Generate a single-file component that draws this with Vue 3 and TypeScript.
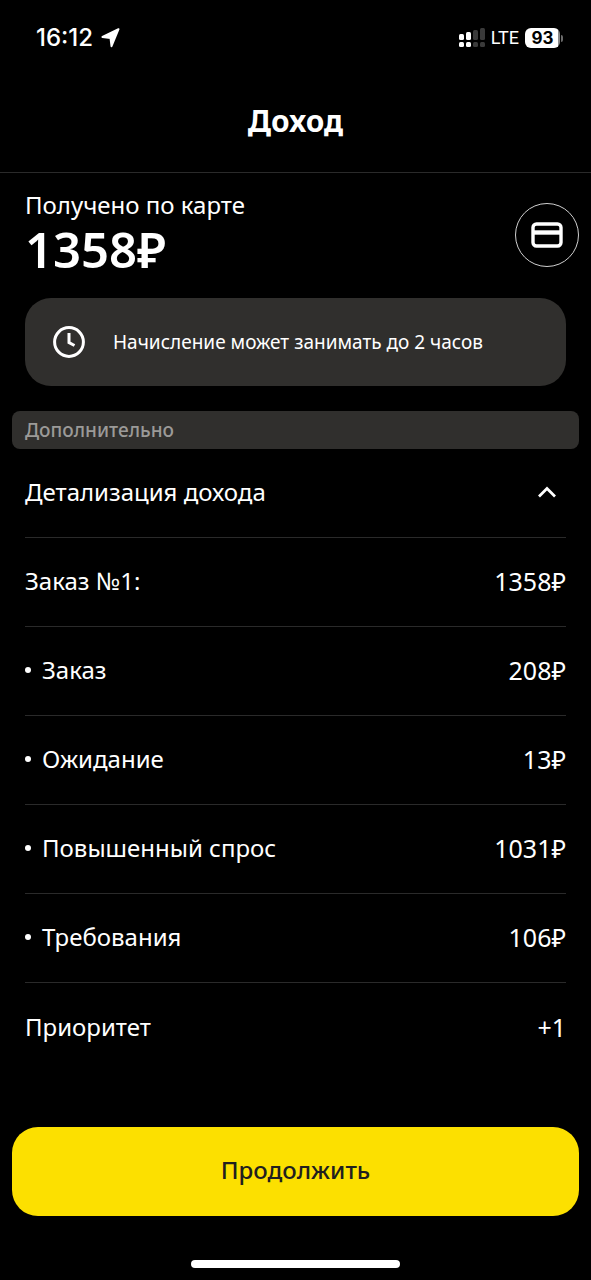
<script setup lang="ts">
import { ref } from 'vue'

interface Row {
  label: string
  value: string
  nested?: boolean
}

const expanded = ref<boolean>(true)

const rows: Row[] = [
  { label: 'Заказ №1:', value: '1358₽' },
  { label: 'Заказ', value: '208₽', nested: true },
  { label: 'Ожидание', value: '13₽', nested: true },
  { label: 'Повышенный спрос', value: '1031₽', nested: true },
  { label: 'Требования', value: '106₽', nested: true },
  { label: 'Приоритет', value: '+1' },
]
</script>

<template>
  <div class="screen">
    <div class="status">
      <div class="status-left">
        <span class="time">16:12</span>
        <svg class="location" width="19" height="20" viewBox="0 0 19 20" aria-hidden="true">
          <path d="M17.500 1.200 1.500 9 9.500 10 10.500 18.200Z" fill="#fff" stroke="#fff" stroke-width="2" stroke-linejoin="round" />
        </svg>
      </div>
      <div class="status-right">
        <svg class="signal" width="26" height="20" viewBox="0 0 26 20" aria-hidden="true">
          <g fill="#fff">
            <rect x="0" y="6" width="5" height="6" rx="1.500" />
            <rect x="0" y="14" width="5" height="5" rx="1.500" />
            <rect x="7" y="4" width="5" height="8" rx="1.500" />
            <rect x="7" y="14" width="5" height="5" rx="1.500" />
          </g>
          <g fill="#3a3a3a">
            <rect x="14" y="2" width="5" height="10" rx="1.500" />
            <rect x="14" y="14" width="5" height="5" rx="1.500" />
            <rect x="21" y="0" width="5" height="12" rx="1.500" />
            <rect x="21" y="14" width="5" height="5" rx="1.500" />
          </g>
        </svg>
        <span class="network">LTE</span>
        <span class="battery">
          <span class="battery-level">93</span>
          <span class="battery-tip"></span>
        </span>
      </div>
    </div>

    <header class="header">
      <h1>Доход</h1>
    </header>

    <main class="content">
      <section class="summary">
        <div>
          <p class="summary-label">Получено по карте</p>
          <p class="summary-amount">1358₽</p>
        </div>
        <button class="card-button" type="button" aria-label="Карта">
          <svg width="32" height="26" viewBox="0 0 32 26" fill="none" stroke="#fff" aria-hidden="true">
            <rect x="2" y="2" width="28" height="22" rx="3.500" stroke-width="3.400" />
            <path d="M2 10.500H30" stroke-width="4.400" />
          </svg>
        </button>
      </section>

      <div class="notice">
        <svg width="32" height="32" viewBox="0 0 32 32" fill="none" stroke="#fff" stroke-width="3" aria-hidden="true">
          <circle cx="16" cy="16" r="14.400" />
          <path d="M16 7V16.500L21.500 19.500" />
        </svg>
        <p>Начисление может занимать до 2 часов</p>
      </div>

      <h2 class="section-title">Дополнительно</h2>

      <section class="details">
        <button class="row toggle" type="button" :aria-expanded="expanded" @click="expanded = !expanded">
          <span>Детализация дохода</span>
          <svg class="chevron" :class="{ closed: !expanded }" width="18" height="12" viewBox="0 0 18 12" fill="none" stroke="#fff" stroke-width="2.700" aria-hidden="true">
            <path d="M1 10.500 9 2.500 17 10.500" />
          </svg>
        </button>
        <dl v-if="expanded">
          <div v-for="row in rows" :key="row.label" class="row">
            <dt :class="{ nested: row.nested }">{{ row.label }}</dt>
            <dd>{{ row.value }}</dd>
          </div>
        </dl>
      </section>
    </main>

    <footer class="footer">
      <button class="continue" type="button">Продолжить</button>
      <div class="home-indicator"></div>
    </footer>
  </div>
</template>

<style>
html,
body {
  margin: 0;
  background: #000;
}
</style>

<style scoped>
.screen {
  display: flex;
  flex-direction: column;
  box-sizing: border-box;
  min-height: 100vh;
  background: #000;
  color: #fff;
  font-family: "Noto Sans", "Open Sans", sans-serif;
  font-size: 24px;
  line-height: 32px;
}

h1,
h2,
p,
dl,
dd {
  margin: 0;
}

button {
  margin: 0;
  padding: 0;
  border: 0;
  background: none;
  color: inherit;
  font: inherit;
  cursor: pointer;
}

.status {
  display: flex;
  align-items: center;
  justify-content: space-between;
  height: 76px;
  padding: 0 28px 0 36px;
  font-family: Inter, Roboto, sans-serif;
}

.status-left,
.status-right {
  display: flex;
  align-items: center;
}

.status-left {
  gap: 8px;
}

.status-right {
  gap: 6px;
}

.time {
  font-size: 24px;
  font-weight: 500;
}

.network {
  font-family: Roboto, sans-serif;
  font-size: 18px;
}

.battery {
  display: flex;
  align-items: center;
  gap: 1px;
}

.battery-level {
  width: 35px;
  height: 20px;
  border-radius: 6px;
  background: linear-gradient(90deg, #fff 93%, #8a8a8a 93%);
  color: #000;
  font-size: 17px;
  font-weight: 700;
  line-height: 20px;
  text-align: center;
}

.battery-tip {
  width: 2px;
  height: 7px;
  border-radius: 0 2px 2px 0;
  background: #6a6a6a;
}

.header {
  display: flex;
  align-items: center;
  justify-content: center;
  box-sizing: border-box;
  height: 97px;
  padding-bottom: 6px;
  border-bottom: 1px solid #2a2a2a;
}

h1 {
  font-size: 30px;
  font-weight: 700;
  line-height: 40px;
}

.content {
  padding: 16px 12px 0;
}

.summary {
  display: flex;
  align-items: flex-end;
  justify-content: space-between;
  padding-left: 13px;
}

.summary-amount {
  font-size: 49px;
  font-weight: 600;
  line-height: 56px;
}

.card-button {
  display: flex;
  align-items: center;
  justify-content: center;
  box-sizing: border-box;
  width: 64px;
  height: 64px;
  margin-bottom: 10px;
  border: 1px solid #d0d0d0;
  border-radius: 50%;
}

.notice {
  display: flex;
  align-items: center;
  gap: 28px;
  margin: 21px 13px 25px;
  padding: 28px;
  border-radius: 26px;
  background: #302f2d;
  font-size: 19px;
}

.section-title {
  padding: 3px 13px;
  border-radius: 8px;
  background: #302f2d;
  color: #9b9a98;
  font-size: 19px;
  font-weight: 500;
}

.details {
  padding: 0 13px;
}

.row {
  display: flex;
  align-items: center;
  justify-content: space-between;
  box-sizing: border-box;
  width: 100%;
  min-height: 89px;
  padding-bottom: 2px;
  border-bottom: 1px solid #2a2a2a;
}

.row:last-child {
  border-bottom: 0;
}

.row dd {
  font-size: 25px;
}

.toggle {
  padding-right: 10px;
  text-align: left;
}

.chevron.closed {
  transform: rotate(180deg);
}

.nested {
  display: flex;
  align-items: center;
  gap: 11px;
}

.nested::before {
  width: 6px;
  height: 6px;
  border-radius: 50%;
  background: #fff;
  content: "";
}

.footer {
  margin-top: auto;
  padding: 24px 12px 12px;
}

.continue {
  display: block;
  width: 100%;
  height: 89px;
  padding-bottom: 4px;
  border-radius: 26px;
  background: #fce000;
  color: #21201f;
  font-weight: 500;
}

.home-indicator {
  width: 37%;
  height: 8px;
  margin: 44px auto 0;
  border-radius: 4px;
  background: #fff;
}
</style>
